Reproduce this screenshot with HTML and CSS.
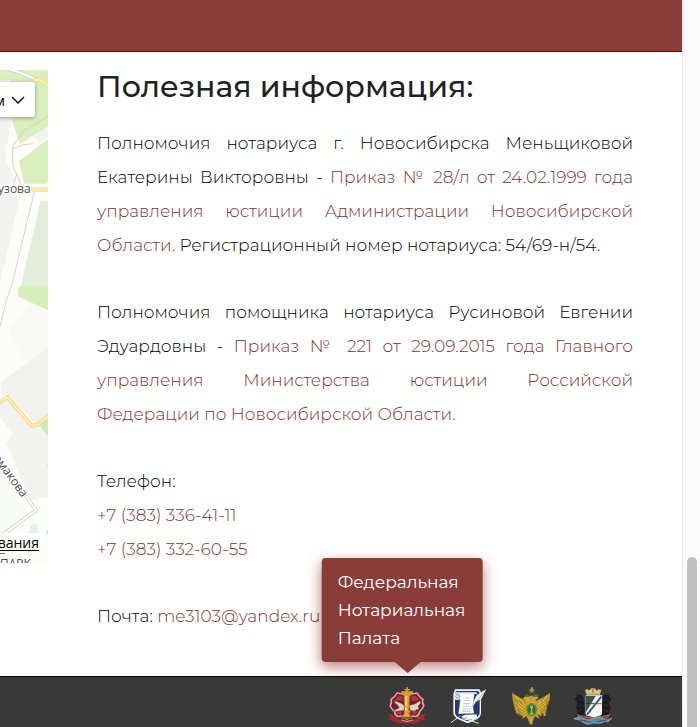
FILE: index.html
```html
<!DOCTYPE html>
<html lang="ru">
<head>
<meta charset="utf-8">
<meta name="viewport" content="width=device-width, initial-scale=1">
<title>Полезная информация</title>
<link rel="stylesheet" href="styles.css">
</head>
<body>
<div class="page">
  <header class="topbar"></header>
  <main class="content">
    <div class="map">
      <svg class="map-canvas" viewBox="0 0 144 1479" preserveAspectRatio="xMinYMin slice" aria-hidden="true">
        <path fill="#fcfdf8" d="M0 0h144v1479H0z"/>
        <path fill="#f2f3f1" d="M0 30h36v110l-22 122 30 75L0 350zM100 200l44-28v30l-26 14zM0 355h66L0 638z"/>
        <path fill="#d9efbd" d="M0 0h144v136L60 222 32 140V30H0zM57 274l87-67v128l-4 6H73z"/>
        <path fill="#d9efbd" d="M60 222l84-52v-40H60z"/>
        <path fill="#e4ecdb" d="M122 394h22v254H62z"/>
        <path fill="#d8efbb" d="M60 648h84v73L56 681q-4-14-3-24z"/>
        <path fill="#f8f9f4" d="M86 704l58 26v104L94 904 26 780z"/>
        <path fill="#f1f2ee" d="M2 937l142-103v266l-48-50-48-50-40-16z"/>
        <path fill="#f2f3f0" d="M22 988l32 18 42 62 48-36v250L92 1290 20 1122 38 1088 0 1044v-45z"/>
        <path fill="#f7faf5" d="M0 1180l84 164-84 70z"/>
        <path fill="#fafcf7" d="M118 1310h26v169H0v-65l52-32 60-56z"/>
        <path fill="#eceeea" d="M92 1364l18-6q8 26-2 47H78z"/>
        <path fill="#cceab7" d="M118 1064l26-22v58zM137 1385l7-5v15zM140 1187l4-3v8z"/>
        <g fill="none" stroke-linecap="round" stroke-linejoin="round">
          <path stroke="#c9cbc8" stroke-width="11" d="M0-10Q60 4 106 28"/>
          <path stroke="#fff" stroke-width="7" d="M0-10Q60 4 106 28"/>
          <path stroke="#f2d89b" stroke-width="13" d="M103 30l17-1 30 20M96 359h54"/>
          <path stroke="#fff0a9" stroke-width="7" d="M103 30l17-1 30 20M96 359h54"/>
          <path stroke="#d9c8b9" stroke-width="2.5" d="M144 140L72 181 40 226q-6 30 0 66l28 60M40 236q30-16 58-15M50 314L38 350M103 365L36 643 18 694 0 771"/>
          <path stroke="#f1d3a0" stroke-width="12" d="M-3 999l24-18 74 86 18-2 36-32"/>
          <path stroke="#fff09f" stroke-width="7" d="M-3 999l24-18 74 86 18-2 36-32"/>
          <path stroke="#c8cac8" stroke-width="10" d="M78 1278l30 43-112 82"/>
          <path stroke="#fff" stroke-width="6" d="M78 1278l30 43-112 82"/>
        </g>
        <g class="map-label">
          <text x="92" y="369" text-anchor="end">улица Кузова</text>
          <text x="66" y="1284" text-anchor="end" transform="rotate(54 66 1284)">Ермакова</text>
          <text x="0" y="1494">ПАРК</text>
        </g>
        <path stroke="#555" stroke-width="3" d="M0 1450h15"/>
      </svg>
      <button class="map-layers" type="button">м
        <svg class="chevron" viewBox="0 0 14 8" aria-hidden="true"><path d="M1 1l6 6 6-6"/></svg>
      </button>
      <a class="map-terms" href="#">вания</a>
    </div>
    <section class="info">
      <h2>Полезная информация:</h2>
      <p class="justified">Полномочия нотариуса г. Новосибирска Меньщиковой Екатерины Викторовны - <a href="#">Приказ № 28/л от 24.02.1999 года управления юстиции Администрации Новосибирской Области.</a> Регистрационный номер нотариуса: 54/69-н/54.</p>
      <p class="justified">Полномочия помощника нотариуса Русиновой Евгении Эдуардовны - <a href="#">Приказ № 221 от 29.09.2015 года Главного управления Министерства юстиции Российской Федерации по Новосибирской Области.</a></p>
      <p>Телефон:<br><a href="#">+7 (383) 336-41-11</a><br><a href="#">+7 (383) 332-60-55</a></p>
      <p>Почта: <a href="#">me3103@yandex.ru</a></p>
    </section>
  </main>
  <footer class="footer">
    <a class="emblem" href="#" aria-describedby="chamber-tip">
      <svg viewBox="27 30 114 114" aria-hidden="true">
        <path fill="#a92a28" d="M28 112l13 1 16 12q27 13 54 0l14-12 15-1-6 9 5 8-16 2-16 9-15-3q-8 7-16 0l-16 3-15-9-17-2 7-8z"/>
        <path fill="#dfaaa0" d="M53 46l15 3 16-8 16 8 16-3q5 13 18 20-4 10 3 20-4 10-13 18-2 13-12 17l-12-1-16 9-16-9-12 1q-10-4-12-17-9-8-13-18 7-10 3-20 13-7 19-20z"/>
        <path fill="#7d1828" d="M55 50l14 3 15-8 15 8 14-3q6 12 16 18-3 9 3 18-4 9-12 16-2 11-10 14l-12-1-14 8-14-8-12 1q-8-3-10-14-8-7-12-16 6-9 3-18 10-6 16-18z"/>
        <path fill="#b23445" d="M57 56l14 3v12l-24-1zM97 59l14-3 10 14-22 2zM52 104l18-2-4 11-11-1zM98 102l18 1-4 9-10 1z"/>
        <path fill="#d6d5ce" stroke="#777169" stroke-width="1.5" d="M46 71l20 8 10 7v14l-14 1-17 3 4-6 12-5-4-8-9-7zM92 85l14-3 17-10 2 6-8 10 3 8-9 2-4 4-15-3z"/>
        <path fill="#96581b" d="M73 50h22l-3 57 7 12v7H68v-7l7-12z"/>
        <path fill="#e2a338" d="M76 49h15l-3 60 7 10H70l8-11z"/>
        <path fill="#fbd873" d="M78 54h6v52h-6z"/>
        <path fill="#d99b2e" d="M67 43h35v7l-9 6H75l-8-6zM82 31h5v5h6v4h-6v6h-5v-6h-6v-4h6zM75 86h18v5H75zM75 101h19v6H75z"/>
        <path fill="none" stroke="#e4a095" stroke-width="3" d="M67 129q17 9 34 0"/>
      </svg>
      <span class="tooltip" id="chamber-tip" role="tooltip">Федеральная Нотариальная Палата</span>
    </a>
    <a class="emblem" href="#" aria-label="Нотариальная палата">
      <svg viewBox="213 30 114 114" aria-hidden="true">
        <path fill="#f0f4f8" d="M228 37h73l5 8v61q0 17-17 23l-23 10-25-11q-18-7-18-22V51z"/>
        <path fill="#23396b" d="M232 42h66l4 6v57q0 12-13 18l-24 10-23-10q-14-6-14-17V50z"/>
        <path fill="#f0f4fa" d="M231 46h61l3 5h-51l-2 4h-16z"/>
        <path fill="#fff" stroke="#a8b7cd" stroke-width="1" d="M225 54q8-8 17-3l44-1-3 23q-3 15 2 36l-47 1 3-18 3-25q-16 5-19-4z"/>
        <circle cx="236" cy="58" r="6" fill="#dce7f6" stroke="#456899" stroke-width="2"/>
        <g stroke="#738bb6" stroke-width="2" stroke-dasharray="5 2"><path d="M257 63h13M254 71h18M253 80h20M252 88h21M251 96h23M249 103h27"/></g>
        <path fill="#f8faff" stroke="#91a5c3" d="M247 119q7-7 18-6l27-1q6 7-3 14l-25 3q-12 0-17-10z"/>
        <path fill="none" stroke="#456899" stroke-width="2" d="M249 121q12 10 13-1"/>
        <path fill="#f9fbff" stroke="#9baac1" d="M321 37l-14 28-16 9-17 26 12-32 8-14z"/>
        <path stroke="#52688f" stroke-width="1.5" d="M313 47l-30 39"/>
        <path fill="none" stroke="#e5eaf1" stroke-width="3" d="M216 137l26-19M269 129l30 10"/>
      </svg>
    </a>
    <a class="emblem" href="#" aria-label="Министерство юстиции">
      <svg viewBox="36 30 114 114" aria-hidden="true">
        <g fill="#c79b2c" stroke="#927025" stroke-width="1">
          <path d="M78 70l-17-7-25-15 2 20 4 16 4 16 5 11 8-2 4 7 8-4-5 13 14-7 10 24h5l9-24 15 7-6-13 9 4 4-7 9 3 4-12 3-16 7-16 2-20-26 16-16 7-8 9 3-16-8-9-9 3-8-3-9 9 4 16z"/>
        </g>
        <path fill="#dfb136" d="M40 52l25 17 9 14-6 28-7-15-9-5 5-6-10-9 7-3zM148 51l-25 16-9 15 4 29 9-14 7-5-4-5 10-9-7-4z"/>
        <g fill="none" stroke="#79672c" stroke-width="2"><path d="M41 60l31 26M44 70l28 25M46 83l24 19M51 96l17 13M148 60l-31 26M145 71l-28 23M142 84l-24 18M137 96l-17 13"/></g>
        <path fill="#d5a52f" d="M80 73l-8-10 4-7 11 3 2 12 4 4 4-4 3-12 11-3 5 7-9 5 1 10-8 7H86z"/>
        <path fill="#38714a" d="M73 51l4 3 4-5 4 5 4-2-2 8-12-1zM99 53l4 1 4-5 4 5 4-2-2 8-12-1zM86 37l5 3 4-7 4 7 6-3-3 12H89z"/>
        <path fill="#b99b3d" d="M93 31h5v14h-5zM89 36h13v4H89z"/>
        <ellipse cx="95" cy="98" rx="16" ry="20" fill="#4b8b48"/>
        <ellipse cx="95" cy="98" rx="11" ry="15" fill="#276c45"/>
        <path fill="#c9a637" d="M91 86h8l-2 8 1 15h4v4H88v-4h4l1-15z"/>
        <circle cx="95" cy="90" r="4" fill="#d8ba41"/>
        <path fill="none" stroke="#519052" stroke-width="3" d="M47 107l14 9M122 75l12-16M67 79l-10-9"/>
        <path stroke="#dab238" stroke-width="3" d="M66 117l13-14M125 117l-14-14M95 119v23"/>
        <circle cx="134" cy="113" r="4" fill="#c8a43e"/>
      </svg>
    </a>
    <a class="emblem" href="#" aria-label="Новосибирск">
      <svg viewBox="222 30 114 114" aria-hidden="true">
        <path fill="#e3c28b" stroke="#98754b" d="M255 38l9-1 3 4 7-7h10l7 7 3-4 10 1-6 20h-37z"/>
        <path fill="#b98b55" d="M262 50h35v3h-35zM276 35h6v12h-6z"/>
        <path fill="#191c1f" d="M249 60l-6-8-9 3-3-2-1 7-6 6 5 7 3 9-6 8 5 9 1 14-8 4 10 5 18-4 2-30zM309 60l6-8 9 3 4-2v8l6 6-5 6-3 8 7 9-5 10-1 12 9 5-11 4-17-5-2-29z"/>
        <path fill="none" stroke="#36383a" stroke-width="2" d="M230 70l12-5 7 8M230 89l16-7M233 104l13-7M327 70l-12-5-6 8M328 89l-15-7M325 105l-13-8"/>
        <path fill="#f6f6f1" d="M257 55h49v52q0 9-11 10l-14 5-13-5q-11-1-11-10z"/>
        <path fill="#335a51" d="M258 56h47l-47 56z"/>
        <path fill="#fff" d="M288 56h17v8l-42 53q-6-2-6-10z"/>
        <path stroke="#255cab" stroke-width="6" d="M304 59l-43 54"/>
        <path fill="none" stroke="#e3b64c" stroke-width="4" d="M270 84q11-11 22 0"/>
        <path fill="none" stroke="#292929" stroke-width="2" d="M258 80h47"/>
        <path fill="#6e5542" d="M231 111l24 6 25 4 28-4 24-7-5 13-17 10-59-1-20-7z"/>
        <path fill="none" stroke="#b9564c" stroke-width="3" d="M232 114q25 10 49 8t49-8"/>
        <path fill="#4c8bb1" stroke="#a9c5cc" stroke-width="2" d="M222 125q14-9 27 0t31 0 31 0 25-2l-12 11q-12-2-19 3t-24 0q-18 9-29 0t-30-12z"/>
        <path fill="none" stroke="#9a4b46" stroke-width="3" d="M239 132q20-5 35 9M321 132q-19-5-34 9"/>
        <path fill="none" stroke="#1e557f" stroke-width="2" d="M239 129q19 1 29 7M318 129q-19 1-28 7"/>
      </svg>
    </a>
  </footer>
</div>
<div class="scroll-track" aria-hidden="true"><div class="scroll-thumb"></div></div>
</body>
</html>
```
FILE: styles.css
```css
* { box-sizing: border-box; }

body {
  margin: 0;
  min-height: 100vh;
  display: flex;
  background: #fff;
  color: #000;
  font-family: Montserrat, Inter, "Open Sans", sans-serif;
  font-size: 17px;
  font-weight: 300;
  line-height: 34px;
  overflow: hidden;
}

.page {
  flex: 1;
  min-width: 0;
  min-height: 100vh;
  display: flex;
  flex-direction: column;
}

.topbar {
  height: 52px;
  background: #8a3c38;
  border: solid #790000;
  border-width: 0 1px 1px 0;
}

.content {
  flex: 1;
  display: grid;
  grid-template-columns: 48px minmax(0, 1fr);
  column-gap: 49px;
  align-items: start;
  padding: 18px 50px 0 0;
}

.map {
  position: relative;
  height: 493px;
  overflow: hidden;
}

.map-canvas {
  display: block;
  width: 100%;
  height: 100%;
}

.map-label {
  fill: #4b4c4e;
  stroke: #fff;
  stroke-width: 6px;
  paint-order: stroke;
  font-family: "Open Sans", sans-serif;
  font-size: 36px;
  font-weight: 400;
}

.map-layers {
  position: absolute;
  top: 12px;
  right: 13px;
  height: 35px;
  display: flex;
  align-items: center;
  gap: 6px;
  padding: 0 10px;
  border: 0;
  border-radius: 3px;
  background: #fff;
  box-shadow: 0 1px 4px rgba(0, 0, 0, .35);
  color: #000;
  font: 500 15px/20px "Open Sans", sans-serif;
}

.chevron {
  width: 14px;
  height: 8px;
  fill: none;
  stroke: #000;
  stroke-width: 1.3;
}

.map-terms {
  position: absolute;
  right: 4px;
  bottom: 10px;
  padding: 0 5px;
  border-radius: 3px;
  background: rgba(255, 255, 255, .8);
  color: #000;
  font: 500 14px/20px "Open Sans", sans-serif;
  text-decoration: underline;
  text-underline-offset: 2px;
}

.info h2 {
  margin: 0 0 22px;
  color: #212121;
  font-size: 30px;
  font-weight: 500;
  line-height: 34px;
}

.info p { margin: 0 0 33px; }

.info .justified { text-align: justify; }

.info a {
  color: #85302c;
  text-decoration: none;
}

.footer {
  display: flex;
  gap: 24px;
  height: 51px;
  padding: 10px 70px 0;
  justify-content: flex-end;
  background: linear-gradient(#383838, #3a3a3a);
  border: solid #080808;
  border-width: 1px 1px 0 0;
}

.emblem {
  position: relative;
  width: 38px;
  height: 38px;
}

.emblem svg {
  display: block;
  width: 100%;
  height: 100%;
}

.tooltip {
  position: absolute;
  left: 50%;
  bottom: calc(100% + 25px);
  width: 161px;
  padding: 10px 16px;
  transform: translateX(-53%);
  border-radius: 4px;
  background: #8a3c38;
  box-shadow: 0 5px 14px rgba(121, 0, 0, .5);
  color: #fff;
  font-size: 17px;
  font-weight: 400;
  line-height: 28px;
}

.tooltip::after {
  content: "";
  position: absolute;
  top: 100%;
  left: 50%;
  margin-left: -8px;
  border: solid transparent;
  border-width: 11px 13px 0;
  border-top-color: #8a3c38;
}

.scroll-track {
  flex: 0 0 17px;
  height: 100vh;
  margin-left: -1px;
  padding: 557px 3px 0 4px;
  background: #fafafa;
  border-left: 1px solid #e8e8e8;
  background-clip: padding-box;
}

.scroll-track { flex-basis: 17px; }

.scroll-thumb {
  width: 10px;
  height: 100%;
  border-radius: 5px 5px 0 0;
  background: #c1c1c1;
}
```
